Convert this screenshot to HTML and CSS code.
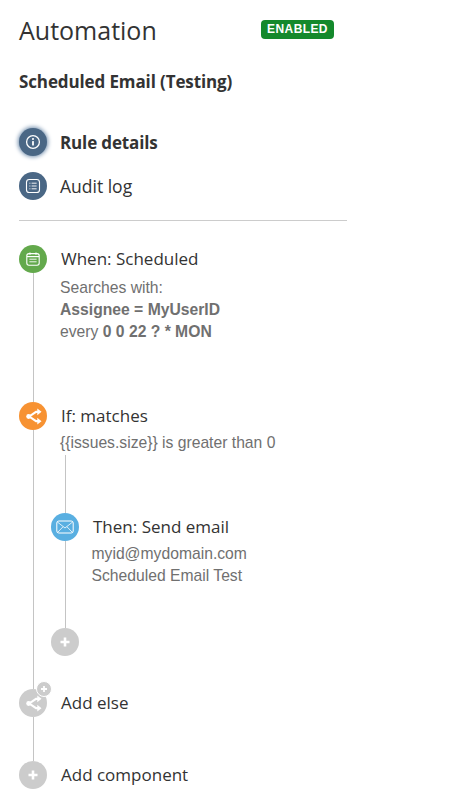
FILE: index.html
```html
<!doctype html>
<html lang="en">
<head>
    <meta http-equiv="Content-Type" content="text/html; charset=utf-8"/>
    <title>Automation</title>
    <link rel="stylesheet" href="styles.css">
</head>

<body>
    <div class="panel">
        <div class="head">
            <h1>Automation</h1>
            <span class="lozenge">ENABLED</span>
        </div>
        <h2>Scheduled Email (Testing)</h2>

        <ul class="nav">
            <li class="nav-item current">
                <span class="dot dot-nav">
                    <svg width="16" height="16" viewBox="0 0 16 16"><circle cx="8" cy="8" r="6.4" fill="none" stroke="#fff" stroke-width="1.3"/><rect x="7.1" y="7" width="1.8" height="4.4" rx=".5" fill="#fff"/><circle cx="8" cy="5" r="1.05" fill="#fff"/></svg>
                </span>
                Rule details
            </li>
            <li class="nav-item">
                <span class="dot dot-nav">
                    <svg width="16" height="16" viewBox="0 0 16 16"><rect x="1.5" y="1.5" width="13" height="13" rx="2.8" fill="none" stroke="#fff" stroke-width="1.1"/><path d="M4.4 5.2h1M6.6 5.2h5M4.4 8h1M6.6 8h5M4.4 10.8h1M6.600 10.8h5" stroke="#fff" stroke-width=".9"/></svg>
                </span>
                Audit log
            </li>
        </ul>

        <div class="flow">
            <div class="step step-when">
                <div class="rail">
                    <span class="dot dot-green">
                        <svg width="16" height="16" viewBox="0 0 16 16"><rect x="1.8" y="2.6" width="12.4" height="11.6" rx="2.200" fill="none" stroke="#fff" stroke-width="1.1"/><path d="M2 5.6h12" stroke="#fff" stroke-width="1.2"/><path d="M5 1.4v2.4M11 1.4v2.400" stroke="#fff" stroke-width="1.1"/><path d="M4.4 8.2h7.2M4.4 10.8h7.2" stroke="#fff" stroke-width=".9"/></svg>
                    </span>
                    <span class="line"></span>
                </div>
                <div class="body">
                    <div class="title">When: Scheduled</div>
                    <div class="desc">Searches with:<br><b>Assignee = MyUserID</b><br>every <b>0 0 22 ? * MON</b></div>
                </div>
            </div>

            <div class="step step-if">
                <div class="rail">
                    <span class="dot dot-orange">
                        <svg width="19" height="19" viewBox="0 0 18 18"><path d="M14 4.6h-2.600L5 9l6.400 4.400H14" fill="none" stroke="#fff" stroke-width="2"/><path d="M12.600 1.400l4 3.200-4 3.200zM12.600 10.200l4 3.200-4 3.200z" fill="#fff"/><circle cx="4.400" cy="9" r="2.300" fill="#fff"/></svg>
                    </span>
                    <span class="line"></span>
                </div>
                <div class="body">
                    <div class="title">If: matches</div>
                    <div class="desc">{{issues.size}} is greater than 0</div>

                    <div class="branch">
                        <div class="lead"><span class="line"></span></div>
                        <div class="step step-then">
                            <div class="rail">
                                <span class="dot dot-blue">
                                    <svg width="18" height="14" viewBox="0 0 18 14"><rect x=".8" y="1" width="16.400" height="12" rx="2" fill="none" stroke="#fff" stroke-width="1"/><path d="M1.400 2l7.600 6 7.600-6M1.600 12.400l5.400-5.600M16.400 12.400L11 6.800" fill="none" stroke="#fff" stroke-width=".8"/></svg>
                                </span>
                                <span class="line"></span>
                            </div>
                            <div class="body">
                                <div class="title">Then: Send email</div>
                                <div class="desc">myid@mydomain.com<br>Scheduled Email Test</div>
                            </div>
                        </div>
                        <span class="dot dot-grey">
                            <svg width="12" height="12" viewBox="0 0 12 12"><path d="M6 1.500v9M1.500 6h9" stroke="#fff" stroke-width="2.600"/></svg>
                        </span>
                    </div>
                </div>
            </div>

            <div class="step step-else">
                <div class="rail">
                    <span class="dot dot-grey">
                        <svg width="19" height="19" viewBox="0 0 18 18"><path d="M14 4.600h-2.600L5 9l6.400 4.400H14" fill="none" stroke="#fff" stroke-width="2"/><path d="M12.600 1.400l4 3.200-4 3.200zM12.600 10.200l4 3.200-4 3.200z" fill="#fff"/><circle cx="4.400" cy="9" r="2.300" fill="#fff"/></svg>
                        <span class="mini">
                            <svg width="8" height="8" viewBox="0 0 8 8"><path d="M4 1v6M1 4h6" stroke="#fff" stroke-width="1.800"/></svg>
                        </span>
                    </span>
                    <span class="line"></span>
                </div>
                <div class="body">
                    <div class="title">Add else</div>
                </div>
            </div>

            <div class="step step-add">
                <div class="rail">
                    <span class="dot dot-grey">
                        <svg width="12" height="12" viewBox="0 0 12 12"><path d="M6 1.500v9M1.500 6h9" stroke="#fff" stroke-width="2.600"/></svg>
                    </span>
                </div>
                <div class="body">
                    <div class="title">Add component</div>
                </div>
            </div>
        </div>
    </div>
</body>
</html>
```

FILE: styles.css
```css
* {
    padding: 0;
    margin: 0;
    list-style: none;
    box-sizing: border-box;
}

body {
    background: #fff;
    color: #333;
    font-family: "Open Sans", "Liberation Sans", sans-serif;
}

.panel {
    width: 328px;
    margin-left: 19px;
    padding-top: 13px;
}

.head {
    display: flex;
    justify-content: space-between;
    align-items: center;
    width: 315px;
    height: 34px;
}

h1 {
    font-size: 25px;
    font-weight: 400;
    line-height: 34px;
}

.lozenge {
    width: 73px;
    height: 19px;
    margin-top: -1px;
    border-radius: 4px;
    background: #14892c;
    color: #fff;
    font-family: "Liberation Sans", sans-serif;
    font-size: 12px;
    font-weight: bold;
    letter-spacing: .4px;
    line-height: 19px;
    text-align: center;
}

h2 {
    margin-top: 23px;
    font-size: 17px;
    font-weight: 700;
    letter-spacing: -.12px;
    line-height: 24px;
}

.nav {
    margin-top: 34px;
    padding-bottom: 20px;
    border-bottom: 1px solid #ccc;
}

.nav-item {
    display: flex;
    align-items: center;
    gap: 13px;
    height: 28px;
    margin-bottom: 16px;
    font-size: 17.5px;
}

.nav-item:last-child {
    margin-bottom: 0;
}

.nav-item.current {
    font-size: 17px;
    font-weight: 700;
    letter-spacing: -.15px;
}

.current .dot {
    box-shadow: 0 0 4px 1px #6f8cab;
}

.dot {
    position: relative;
    display: flex;
    flex: none;
    align-items: center;
    justify-content: center;
    width: 28px;
    height: 28px;
    border-radius: 50%;
}

.dot-nav {
    background: #4a6785;
}

.dot-green {
    background: #63a94c;
}

.dot-orange {
    background: #f79232;
}

.dot-blue {
    background: #59afe1;
}

.dot-grey {
    background: #ccc;
}

.mini {
    position: absolute;
    top: -8px;
    right: -5px;
    display: flex;
    align-items: center;
    justify-content: center;
    width: 16px;
    height: 16px;
    border: 1px solid #fff;
    border-radius: 50%;
    background: #ccc;
}

.flow {
    margin-top: 24px;
}

.step {
    display: flex;
}

.rail {
    display: flex;
    flex: none;
    flex-direction: column;
    align-items: center;
    width: 28px;
}

.line {
    flex: 1;
    width: 1px;
    background: #c4c4c4;
}

.body {
    padding-left: 14px;
}

.title {
    height: 28px;
    font-size: 17px;
    line-height: 28px;
}

.desc {
    margin-top: 2px;
    margin-left: -1px;
    color: #707070;
    font-family: "Liberation Sans", sans-serif;
    font-size: 15.7px;
    line-height: 22px;
}

.step-when .desc {
    margin-top: 4px;
}

.step-then .desc {
    margin-left: -1.500px;
}

.step-when {
    height: 157px;
}

.step-if {
    height: 287px;
}

.step-else {
    height: 72px;
}

.branch {
    display: flex;
    flex-direction: column;
    margin-top: 1px;
    margin-left: -10px;
}

.lead {
    display: flex;
    flex-direction: column;
    align-items: center;
    width: 28px;
    height: 58px;
}

.step-then {
    height: 115px;
}
```
